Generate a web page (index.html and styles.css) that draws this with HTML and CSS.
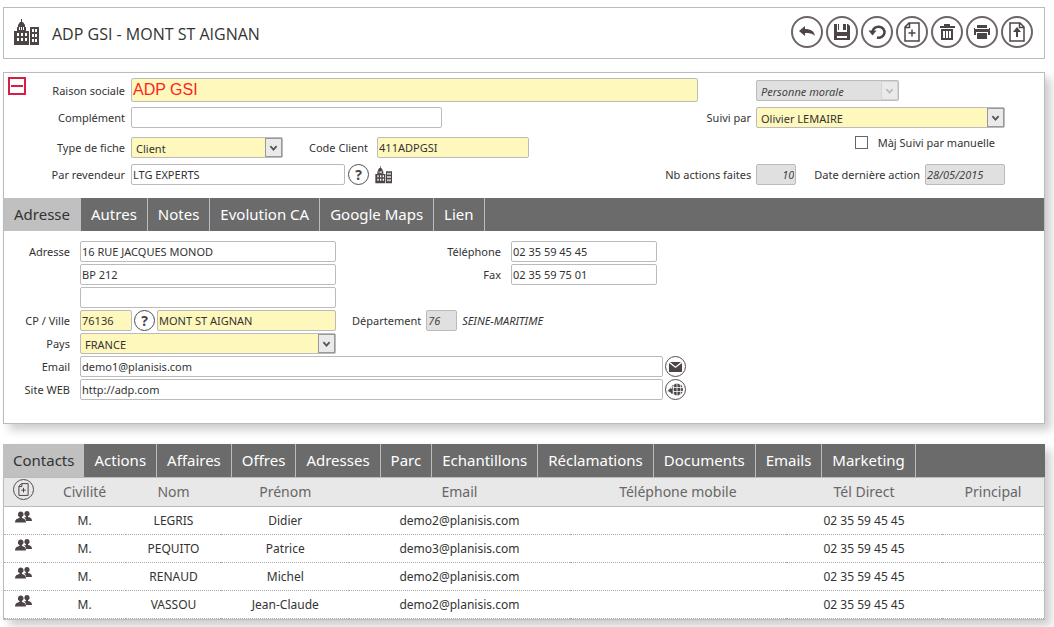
FILE: index.html
```html
<!DOCTYPE html>
<html lang="fr">
<head>
<meta charset="utf-8">
<title>ADP GSI - MONT ST AIGNAN</title>
<link rel="stylesheet" href="styles.css">
</head>
<body>
<svg class="sprite" aria-hidden="true">
  <symbol id="building" viewBox="0 0 26 27">
    <path fill="currentColor" fill-rule="evenodd" d="M7 0h1v3h1l2 3v2h1v4h3v14H0V12h3V8h1V6l2-3h1zM5 8v3h1V8zm2 0v3h1V8zm2 0v3h1V8zM3 14v3h2v-3zm4 0v3h2v-3zm4 0v3h2v-3zM3 19v3h2v-3zm4 0v3h2v-3zm4 0v3h2v-3z"/>
    <path fill="currentColor" fill-rule="evenodd" d="M16 8h9v18h-9zM18 10v3h2v-3zm3 0v3h2v-3zM18 15v3h2v-3zm3 0v3h2v-3zM18 20v3h2v-3zm3 0v3h2v-3z"/>
  </symbol>
  <symbol id="reply" viewBox="0 0 32 32">
    <path fill="currentColor" d="M8 15l6-5v3c6 0 9 2 10 7-3-3-6-3-10-3v3z"/>
  </symbol>
  <symbol id="save" viewBox="0 0 32 32">
    <path fill="currentColor" fill-rule="evenodd" d="M8 8h3v8h10V8h1l2 2v14H8zM11 20v2h10v-2z"/>
    <path fill="currentColor" d="M12 8h1v6h-1zM17 8h3v6h-3z"/>
  </symbol>
  <symbol id="undo" viewBox="0 0 32 32">
    <path fill="none" stroke="currentColor" stroke-width="2.500" d="M11.500 16a6 5.500 0 1 1 4.500 5.500"/>
    <path fill="currentColor" d="M7.500 14.500h8l-4 5z"/>
  </symbol>
  <symbol id="newdoc" viewBox="0 0 32 32">
    <path fill="none" stroke="currentColor" stroke-width="1.500" d="M9 11l4-4h10v18H9zM9 11.500h4.500V7"/>
    <path fill="none" stroke="currentColor" stroke-width="1.500" d="M12.500 17h7M16 13.500v7"/>
  </symbol>
  <symbol id="trash" viewBox="0 0 32 32">
    <path fill="currentColor" fill-rule="evenodd" d="M13 8h6v2h5v2H9v-2h4zM10 13h12v11H10zM12 15v7h2v-7zm3 0v7h2v-7zm3 0v7h2v-7z"/>
  </symbol>
  <symbol id="printer" viewBox="0 0 32 32">
    <path fill="currentColor" d="M11 9h10v3H11zM8 12h1v1h14v-1h1v7h-2v-3H10v3H8zM11 17h10v6H11z"/>
  </symbol>
  <symbol id="upload" viewBox="0 0 32 32">
    <path fill="none" stroke="currentColor" stroke-width="1.500" d="M9 7h10l4 4v14H9zM18.500 7v4.500H23"/>
    <path fill="currentColor" d="M16 11l4 5h-3v5h-2v-5h-3z"/>
  </symbol>
  <symbol id="mail" viewBox="0 0 21 21">
    <path fill="currentColor" d="M4 7l6.500 5L17 7v9H4zM5 6h11l-5.500 4.500z"/>
  </symbol>
  <symbol id="globe" viewBox="0 0 21 21">
    <circle cx="12" cy="10.500" r="6" fill="currentColor"/>
    <path fill="none" stroke="#fff" stroke-width=".8" d="M6 8.500h12M6 12.500h12M12 4v13M9 5c-1 4-1 7 0 11M15 5c1 4 1 7 0 11"/>
    <path fill="currentColor" stroke="#fff" stroke-width=".5" d="M2.500 12L6 8v2l2-3v8H6v-1z"/>
  </symbol>
  <symbol id="people" viewBox="0 0 18 14">
    <path fill="currentColor" d="M12 1a2.700 2.700 0 0 1 1 5.200V7c2 .4 4 1 4 4h-6c0-2-1-3-2-3.500L11 7v-.8A2.700 2.700 0 0 1 12 1z"/>
    <path fill="currentColor" d="M6 1.500a2.900 2.900 0 0 1 1 5.500v1c2 .5 4 1.500 4 4.500H0C0 9.500 2 8.500 4.500 8V7A2.900 2.900 0 0 1 6 1.500z"/>
  </symbol>
  <symbol id="arrow" viewBox="0 0 17 19">
    <path fill="none" stroke="currentColor" stroke-width="2" d="M5 8l3.500 4L12 8"/>
  </symbol>
</svg>

<header class="panel titlebar">
  <svg class="title-icon" aria-hidden="true"><use href="#building"/></svg>
  <h1 class="title">ADP GSI - MONT ST AIGNAN</h1>
  <div class="toolbar">
    <button class="round" type="button" aria-label="Retour"><svg><use href="#reply"/></svg></button>
    <button class="round" type="button" aria-label="Enregistrer"><svg><use href="#save"/></svg></button>
    <button class="round" type="button" aria-label="Annuler"><svg><use href="#undo"/></svg></button>
    <button class="round" type="button" aria-label="Nouveau"><svg><use href="#newdoc"/></svg></button>
    <button class="round" type="button" aria-label="Supprimer"><svg><use href="#trash"/></svg></button>
    <button class="round" type="button" aria-label="Imprimer"><svg><use href="#printer"/></svg></button>
    <button class="round" type="button" aria-label="Exporter"><svg><use href="#upload"/></svg></button>
  </div>
</header>

<main>
<section class="panel shadow record">
  <div class="summary">
    <button class="collapse" type="button" aria-label="Réduire"></button>
    <div class="rows">
      <div class="row">
        <label class="lead" for="raison">Raison sociale</label>
        <input class="field required company" id="raison" value="ADP GSI">
        <div class="side">
          <span class="combo disabled kind"><select class="field" aria-label="Personnalité" disabled><option>Personne morale</option></select><svg><use href="#arrow"/></svg></span>
        </div>
      </div>
      <div class="row">
        <label class="lead" for="complement">Complément</label>
        <input class="field complement" id="complement">
        <div class="side">
          <label for="suivi">Suivi par</label>
          <span class="combo required owner"><select class="field" id="suivi"><option>Olivier LEMAIRE</option></select><svg><use href="#arrow"/></svg></span>
        </div>
      </div>
      <div class="row spaced">
        <label class="lead" for="type">Type de fiche</label>
        <span class="combo required medium"><select class="field" id="type"><option>Client</option></select><svg><use href="#arrow"/></svg></span>
        <label class="code-label" for="code">Code Client</label>
        <input class="field required medium" id="code" value="411ADPGSI">
        <div class="side manual">
          <input class="check" type="checkbox" id="maj"><label for="maj">Màj Suivi par manuelle</label>
        </div>
      </div>
      <div class="row">
        <label class="lead" for="revendeur">Par revendeur</label>
        <input class="field reseller" id="revendeur" value="LTG EXPERTS">
        <button class="round small" type="button" aria-label="Rechercher le revendeur">?</button>
        <button class="plain" type="button" aria-label="Fiche du revendeur"><svg><use href="#building"/></svg></button>
        <div class="side">
          <label for="nb">Nb actions faites</label>
          <input class="field disabled count" id="nb" value="10" disabled>
          <label class="date-label" for="derniere">Date dernière action</label>
          <input class="field disabled date" id="derniere" value="28/05/2015" disabled>
        </div>
      </div>
    </div>
  </div>

  <nav class="tabs" aria-label="Fiche">
    <button class="tab active" type="button">Adresse</button>
    <button class="tab" type="button">Autres</button>
    <button class="tab" type="button">Notes</button>
    <button class="tab" type="button">Evolution CA</button>
    <button class="tab" type="button">Google Maps</button>
    <button class="tab" type="button">Lien</button>
  </nav>

  <div class="address">
    <label for="adr1">Adresse</label>
    <input class="field" id="adr1" value="16 RUE JACQUES MONOD">
    <label for="tel">Téléphone</label>
    <input class="field" id="tel" value="02 35 59 45 45">

    <input class="field street" aria-label="Adresse, ligne 2" value="BP 212">
    <label for="fax">Fax</label>
    <input class="field" id="fax" value="02 35 59 75 01">

    <input class="field street" aria-label="Adresse, ligne 3">

    <label class="start" for="cp">CP / Ville</label>
    <div class="group">
      <input class="field required zip" id="cp" value="76136">
      <button class="round small" type="button" aria-label="Rechercher la ville">?</button>
      <input class="field required grow" aria-label="Ville" value="MONT ST AIGNAN">
    </div>
    <div class="group department">
      <label for="dep">Département</label>
      <input class="field disabled depcode" id="dep" value="76" disabled>
      <span class="depname">SEINE-MARITIME</span>
    </div>

    <label class="start" for="pays">Pays</label>
    <span class="combo required"><select class="field" id="pays"><option>FRANCE</option></select><svg><use href="#arrow"/></svg></span>

    <label class="start" for="email">Email</label>
    <div class="group wide">
      <input class="field grow" id="email" value="demo1@planisis.com">
      <button class="round small" type="button" aria-label="Envoyer un email"><svg><use href="#mail"/></svg></button>
    </div>

    <label class="start" for="web">Site WEB</label>
    <div class="group wide">
      <input class="field grow" id="web" value="http://adp.com">
      <button class="round small" type="button" aria-label="Ouvrir le site"><svg><use href="#globe"/></svg></button>
    </div>
  </div>
</section>

<section class="related shadow">
  <nav class="tabs" aria-label="Éléments liés">
    <button class="tab active" type="button">Contacts</button>
    <button class="tab" type="button">Actions</button>
    <button class="tab" type="button">Affaires</button>
    <button class="tab" type="button">Offres</button>
    <button class="tab" type="button">Adresses</button>
    <button class="tab" type="button">Parc</button>
    <button class="tab" type="button">Echantillons</button>
    <button class="tab" type="button">Réclamations</button>
    <button class="tab" type="button">Documents</button>
    <button class="tab" type="button">Emails</button>
    <button class="tab" type="button">Marketing</button>
  </nav>
  <div class="panel">
  <table class="contacts">
    <colgroup><col class="c-icon"><col class="c-civ"><col class="c-nom"><col class="c-prenom"><col class="c-email"><col class="c-mobile"><col class="c-direct"><col></colgroup>
    <thead>
      <tr><th><button class="round small" type="button" aria-label="Nouveau contact"><svg><use href="#newdoc"/></svg></button></th><th>Civilité</th><th>Nom</th><th>Prénom</th><th>Email</th><th>Téléphone mobile</th><th>Tél Direct</th><th>Principal</th></tr>
    </thead>
    <tbody>
      <tr><td><svg class="people"><use href="#people"/></svg></td><td>M.</td><td>LEGRIS</td><td>Didier</td><td>demo2@planisis.com</td><td></td><td>02 35 59 45 45</td><td></td></tr>
      <tr><td><svg class="people"><use href="#people"/></svg></td><td>M.</td><td>PEQUITO</td><td>Patrice</td><td>demo3@planisis.com</td><td></td><td>02 35 59 45 45</td><td></td></tr>
      <tr><td><svg class="people"><use href="#people"/></svg></td><td>M.</td><td>RENAUD</td><td>Michel</td><td>demo2@planisis.com</td><td></td><td>02 35 59 45 45</td><td></td></tr>
      <tr><td><svg class="people"><use href="#people"/></svg></td><td>M.</td><td>VASSOU</td><td>Jean-Claude</td><td>demo2@planisis.com</td><td></td><td>02 35 59 45 45</td><td></td></tr>
    </tbody>
  </table>
  </div>
</section>
</main>
</body>
</html>
```

FILE: styles.css
```css
* { box-sizing: border-box; }

body {
  margin: 0;
  padding: 7px 9px 8px 3px;
  background: #fff;
  color: #333;
  font: 11px/21px "Noto Sans", "Open Sans", sans-serif;
}

.sprite { display: none; }

.panel { border: 1px solid #bbb; background: #fff; }
.shadow { box-shadow: 6px 6px 9px rgba(0, 0, 0, .2); }

/* Title bar */
.titlebar {
  display: flex;
  align-items: center;
  height: 52px;
  padding: 0 11px 2px 10px;
}
.title-icon { width: 26px; height: 27px; color: #4d4545; }
.title {
  margin: 0 0 0 12px;
  padding-top: 3px;
  font: 400 16px/24px "Open Sans", "Noto Sans", sans-serif;
}
.toolbar { display: flex; gap: 3px; margin-left: auto; }

.round {
  display: flex;
  flex: none;
  align-items: center;
  justify-content: center;
  width: 32px;
  height: 32px;
  padding: 0;
  border: 2px solid #6e6666;
  border-radius: 50%;
  background: #fff;
  color: #4d4545;
}
.round svg { flex: none; width: 32px; height: 32px; }
.round.small {
  width: 21px;
  height: 21px;
  border: 1px solid #544c4c;
  font: 700 14px/18px "Noto Sans", sans-serif;
}
.round.small svg { width: 21px; height: 21px; }

/* Fields */
label { white-space: nowrap; }
.field {
  width: 100%;
  min-width: 0;
  height: 21px;
  margin: 0;
  padding: 0 1px;
  border: 1px solid #bbb;
  border-radius: 2px;
  background: #fff;
  color: #333;
  font: inherit;
}
.required, .required .field { background: #fff8bc; }
.disabled, .disabled .field {
  background: #e0e0e0;
  color: #444;
  font-style: italic;
  opacity: 1;
}
.combo { display: grid; border-radius: 2px; }
.combo > * { grid-area: 1 / 1; }
.combo .field { padding: 0 20px 2px 4px; appearance: none; }
.combo svg {
  justify-self: end;
  align-self: center;
  width: 17px;
  height: 19px;
  margin-right: 1px;
  border: 1px solid #999;
  background: #eaeaea;
  color: #555;
  pointer-events: none;
}
.combo.disabled svg { border-color: #d4d4d4; color: #bbb; }

/* Record summary */
.record { margin-top: 13px; }
.summary { display: flex; padding: 4px 39px 13px 4px; }
.collapse {
  display: flex;
  align-items: center;
  justify-content: center;
  width: 18px;
  height: 18px;
  padding: 0;
  border: 2px solid #d81e45;
  background: #fff;
}
.collapse::before { content: ""; width: 12px; height: 2px; background: #d81e45; }
.rows { display: grid; flex: 1; gap: 5px; padding-top: 1px; }
.row { display: flex; align-items: center; }
.row.spaced { margin: 4px 0 1px; }
.lead { flex: none; width: 105px; padding-right: 6px; text-align: right; }
.company {
  flex: 1;
  height: 24px;
  color: #f22;
  font: 16px/22px "Liberation Sans", Arial, sans-serif;
}
.company + .side { width: 307px; padding-left: 58px; }
.complement { width: 311px; }
.medium { width: 152px; }
.code-label { margin: 0 9px 0 26px; }
.reseller { width: 214px; margin-right: 3px; }
.plain { margin-left: 6px; padding: 0; border: 0; background: none; color: #4d4545; }
.plain svg { display: block; width: 18px; height: 18px; }
.side { display: flex; align-items: center; gap: 5px; margin-left: auto; }
.kind { width: 143px; }
.owner { width: 249px; }
.manual { align-self: flex-start; height: 11px; padding-right: 10px; gap: 10px; }
.check {
  width: 13px;
  height: 13px;
  margin: 0;
  border: 1px solid #666;
  background: #fff;
  appearance: none;
}
.count { width: 40px; text-align: right; }
.date-label { margin-left: 13px; }
.date { width: 80px; }

/* Tabs */
.tabs { display: flex; background: #6b6b6b; }
.tab {
  height: 33px;
  padding: 0 10px;
  border: 0;
  border-right: 1px solid #bbb;
  background: #6b6b6b;
  color: #fff;
  font: 15px/31px "Noto Sans", "Open Sans", sans-serif;
}
.tab.active { border-right: 0; background: #c0c0c0; color: #333; }
.record .tab.active { border-right: 1px solid #c0c0c0; }

/* Address */
.address {
  display: grid;
  grid-template-columns: 76px 256fr 175px 146fr 387fr;
  grid-auto-rows: 21px;
  row-gap: 2px;
  padding: 10px 0 23px;
}
.address > label { padding-right: 10px; text-align: right; }
.start { grid-column: 1; }
.street { grid-column: 2; }
.group { display: flex; align-items: center; gap: 2px; }
.zip { width: 52px; flex: none; }
.grow { flex: 1; }
.department { grid-column: 3 / -1; gap: 5px; padding-left: 16px; }
.depcode { width: 31px; }
.depname { font-style: italic; }
.wide { grid-column: 2 / -1; width: 606px; }

/* Related records */
.related { margin-top: 20px; }
.contacts { width: 100%; table-layout: fixed; border-collapse: collapse; }
.c-icon { width: 3.8%; }
.c-civ { width: 7.9%; }
.c-nom { width: 9.2%; }
.c-prenom { width: 12.3%; }
.c-email { width: 21.2%; }
.c-mobile { width: 20.8%; }
.c-direct { width: 15%; }
.contacts th {
  height: 28px;
  padding: 0;
  background: #e8e8e8;
  color: #666;
  font-size: 14px;
  font-weight: 400;
}
.contacts th .round { margin: -4px auto 0; background: none; }
.contacts thead tr { border-bottom: 1px solid #bbb; }
.contacts tbody tr { border-bottom: 1px dotted #aaa; }
.contacts td {
  height: 28px;
  padding: 0;
  font-size: 12px;
  text-align: center;
}
.people { display: block; width: 18px; height: 14px; margin: -6px auto 0; color: #4d4545; }
```
